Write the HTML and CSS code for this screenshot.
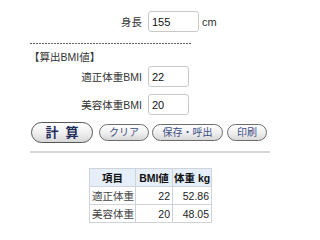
FILE: index.html
```html
<!DOCTYPE html>
<html lang="ja">
<head>
<meta charset="utf-8">
<link rel="stylesheet" href="styles.css">
</head>
<body>
<div class="wrap">
  <div class="row first">
    <span class="label">身長</span>
    <input class="field wide" type="text" value="155">
    <span class="unit">cm</span>
  </div>
  <div class="dashes"></div>
  <div class="heading">【算出BMI値】</div>
  <div class="row r2">
    <span class="label">適正体重BMI</span>
    <input class="field" type="text" value="22">
  </div>
  <div class="row r3">
    <span class="label">美容体重BMI</span>
    <input class="field" type="text" value="20">
  </div>
  <div class="buttons">
    <button class="btn main">計&nbsp;&nbsp;算</button>
    <button class="btn b-clear">クリア</button>
    <button class="btn b-save">保存・呼出</button>
    <button class="btn b-print">印刷</button>
  </div>
  <div class="rule"></div>
  <table class="result">
    <colgroup><col class="c1"><col class="c2"><col class="c3"></colgroup>
    <thead>
      <tr><th>項目</th><th>BMI値</th><th>体重 kg</th></tr>
    </thead>
    <tbody>
      <tr><td class="name">適正体重</td><td class="num">22</td><td class="num">52.86</td></tr>
      <tr><td class="name">美容体重</td><td class="num">20</td><td class="num">48.05</td></tr>
    </tbody>
  </table>
</div>
</body>
</html>
```
FILE: styles.css
```css
html, body {
  margin: 0;
  padding: 0;
  background: #ffffff;
}
body {
  font-family: "Liberation Sans", "Noto Sans CJK JP", sans-serif;
  font-size: 11px;
  color: #222;
}
.wrap {
  width: 240px;
  margin: 0 0 0 30px;
  padding-top: 11px;
}
.row {
  display: flex;
  align-items: center;
}
.label {
  width: 112px;
  text-align: right;
  margin-right: 6px;
  font-size: 10.5px;
  color: #333;
  white-space: nowrap;
}
.field {
  box-sizing: border-box;
  height: 21px;
  width: 41px;
  border: 1px solid #c8c8c8;
  border-radius: 3px;
  padding: 0 3px;
  font-family: "Liberation Sans", sans-serif;
  font-size: 11px;
  color: #111;
  background: #fff;
  margin: 0;
  outline: none;
}
.field.wide {
  width: 51px;
}
.unit {
  margin-left: 3px;
  font-size: 11px;
  color: #333;
}
.dashes {
  margin-top: 11px;
  width: 162px;
  height: 1px;
  background: repeating-linear-gradient(90deg, #666 0 2px, transparent 2px 3px);
}
.heading {
  margin-top: 6px;
  margin-left: -1px;
  line-height: 14px;
  font-size: 10.5px;
  color: #333;
  white-space: nowrap;
}
.r2 {
  margin-top: 2px;
}
.r3 {
  margin-top: 7px;
}
.buttons {
  display: flex;
  align-items: center;
  margin-top: 7px;
  padding-left: 1px;
}
.btn {
  box-sizing: border-box;
  height: 17px;
  border: 1px solid #6c6c6c;
  border-radius: 9px;
  background: linear-gradient(#ffffff, #f0f0f0 50%, #d8d8d8);
  font-family: "Liberation Sans", "Noto Sans CJK JP", sans-serif;
  font-size: 10px;
  color: #3d4f86;
  padding: 0;
  margin: 0;
  line-height: 15px;
  white-space: nowrap;
}
.btn.main {
  width: 62px;
  height: 21px;
  border-radius: 11px;
  font-size: 13px;
  font-weight: bold;
  color: #1f2c5c;
  margin-right: 6px;
  border-color: #555;
}
.b-clear {
  width: 50px;
  margin-right: 3px;
}
.b-save {
  width: 71px;
  margin-right: 4px;
}
.b-print {
  width: 40px;
}
.rule {
  margin-top: 8px;
  height: 2px;
  width: 240px;
  background: #d6d6d6;
}
.result {
  margin: 15px 0 0 59px;
  border-collapse: collapse;
  table-layout: fixed;
  width: 122px;
  font-size: 10.5px;
  color: #222;
}
.c1 { width: 46px; }
.c2 { width: 37px; }
.c3 { width: 39px; }
.result th, .result td {
  border: 1px solid #cfd3da;
  height: 17px;
  padding: 0 2px;
  line-height: 16px;
  white-space: nowrap;
  overflow: hidden;
}
.result th {
  background: #e6eefa;
  font-weight: bold;
  color: #111;
  text-align: center;
  padding: 0 1px;
}
.name {
  text-align: left;
  color: #444;
}
.num {
  text-align: right;
  padding-right: 4px;
}
```
